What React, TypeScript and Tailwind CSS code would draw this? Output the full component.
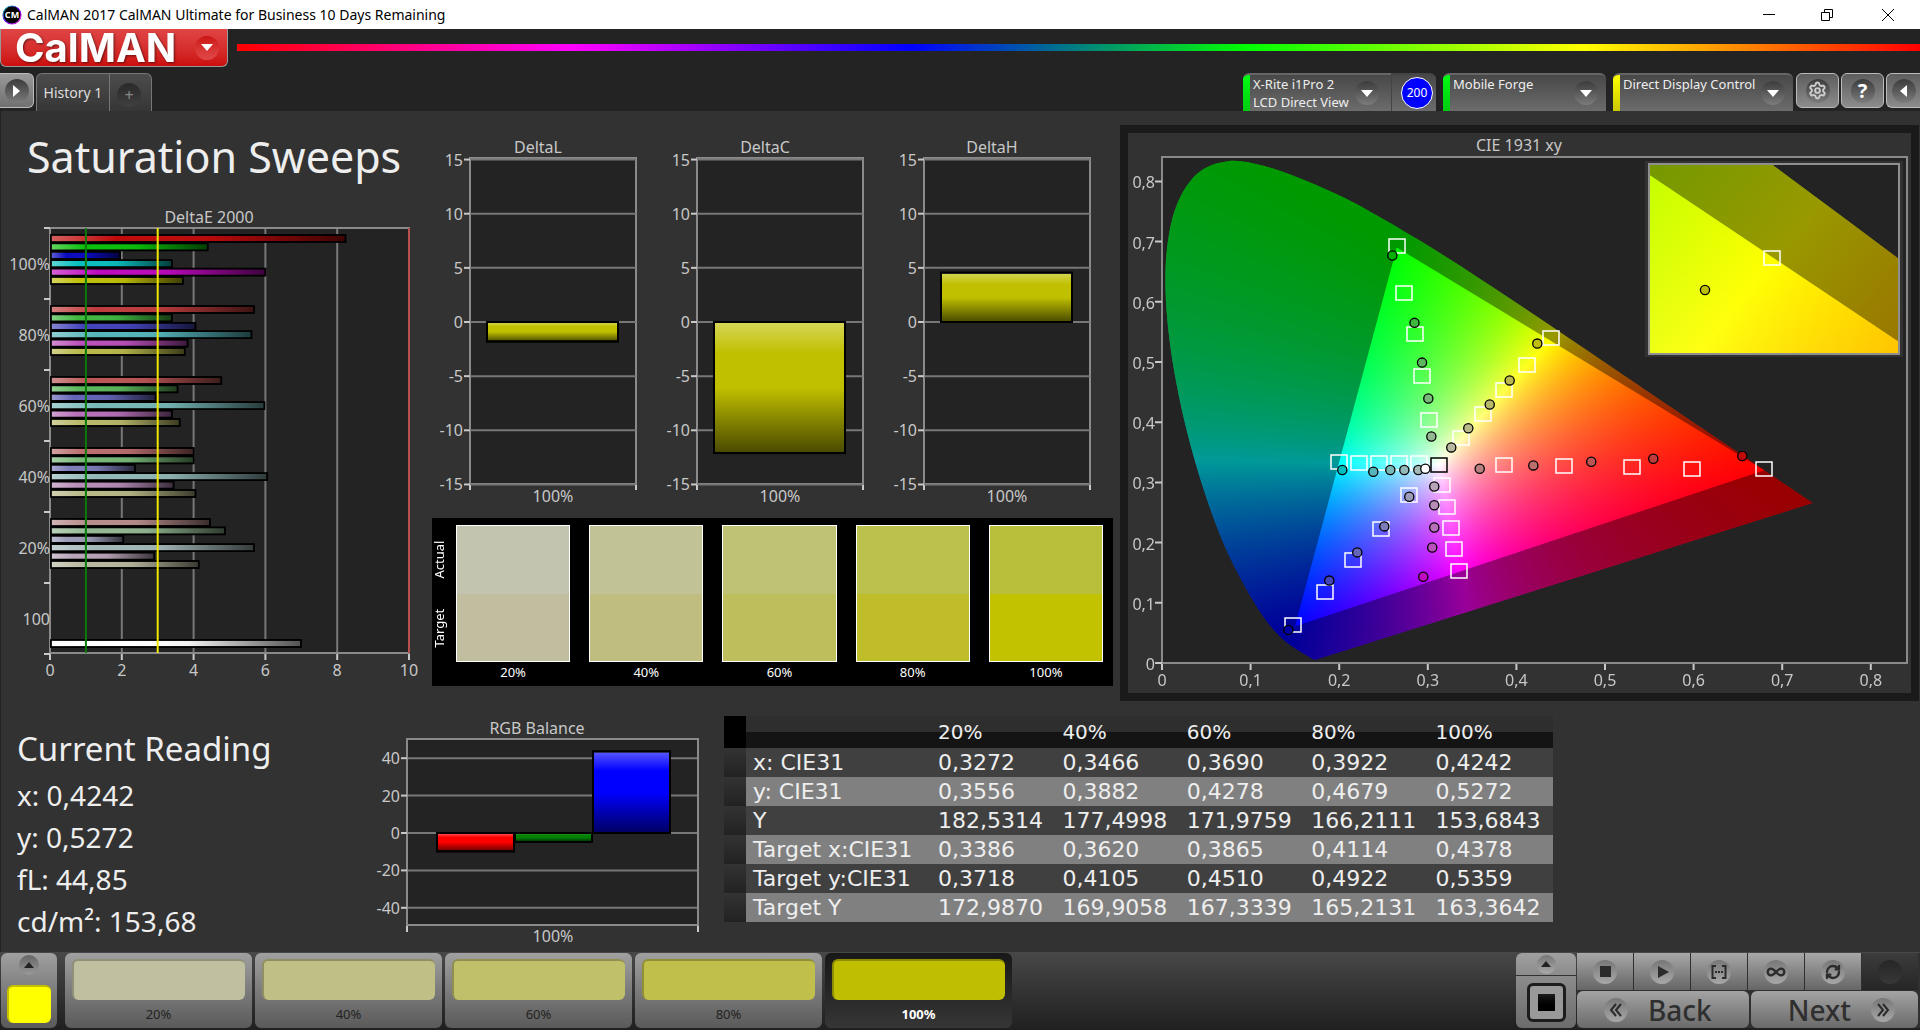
import { useEffect, useRef } from "react";
import type { ReactNode } from "react";
import { Infinity as InfinityIcon, RefreshCw, Settings } from "lucide-react";

type Point = [number, number];

const AXIS_TEXT = "fill-[#c8c8c8] text-[16px]";

const LEVELS = ["100%", "80%", "60%", "40%", "20%"];

const DELTA_E: { value: number; color: string }[][] = [
  [
    { value: 8.26, color: "#bf0a0a" },
    { value: 4.42, color: "#0abf0a" },
    { value: 1.98, color: "#0a0abf" },
    { value: 3.42, color: "#0abfbf" },
    { value: 6.03, color: "#bf0abf" },
    { value: 3.73, color: "#bfbf0a" },
  ],
  [
    { value: 5.71, color: "#bf3c3c" },
    { value: 3.42, color: "#40b840" },
    { value: 4.08, color: "#4444bb" },
    { value: 5.64, color: "#55b5bb" },
    { value: 3.86, color: "#bb50bb" },
    { value: 3.78, color: "#b9b94b" },
  ],
  [
    { value: 4.8, color: "#bb5555" },
    { value: 3.58, color: "#5cb85c" },
    { value: 2.97, color: "#6464b8" },
    { value: 6.0, color: "#78b8b8" },
    { value: 3.42, color: "#b870b8" },
    { value: 3.64, color: "#b9b96a" },
  ],
  [
    { value: 4.03, color: "#bb6e6e" },
    { value: 4.03, color: "#78b878" },
    { value: 2.4, color: "#7c7cb8" },
    { value: 6.08, color: "#92b8b8" },
    { value: 3.47, color: "#b88cb8" },
    { value: 4.08, color: "#b8b888" },
  ],
  [
    { value: 4.48, color: "#b88c8c" },
    { value: 4.9, color: "#94b894" },
    { value: 2.07, color: "#9c9cb8" },
    { value: 5.71, color: "#a4b8b8" },
    { value: 2.93, color: "#b8a4b8" },
    { value: 4.17, color: "#b8b8a0" },
  ],
];

const SWATCHES = [
  { label: "20%", actual: "#c3c4af", target: "#c0be9f", tile: "#c0bf9f" },
  { label: "40%", actual: "#c1c295", target: "#bfbe80", tile: "#c0bf85" },
  { label: "60%", actual: "#bfc174", target: "#bfbe5c", tile: "#c0bf6a" },
  { label: "80%", actual: "#bcc14e", target: "#bfbe2a", tile: "#c0bf4b" },
  { label: "100%", actual: "#b9bf3a", target: "#c3c200", tile: "#bfbe00" },
];

const READINGS = ["x: 0,4242", "y: 0,5272", "fL: 44,85", "cd/m²: 153,68"];

const TABLE_ROWS = [
  ["x: CIE31", "0,3272", "0,3466", "0,3690", "0,3922", "0,4242"],
  ["y: CIE31", "0,3556", "0,3882", "0,4278", "0,4679", "0,5272"],
  ["Y", "182,5314", "177,4998", "171,9759", "166,2111", "153,6843"],
  ["Target x:CIE31", "0,3386", "0,3620", "0,3865", "0,4114", "0,4378"],
  ["Target y:CIE31", "0,3718", "0,4105", "0,4510", "0,4922", "0,5359"],
  ["Target Y", "172,9870", "169,9058", "167,3339", "165,2131", "163,3642"],
];

// Spectral locus, 380-700 nm
const LOCUS: Point[] = [
  [0.1741, 0.005], [0.1714, 0.0051], [0.1689, 0.0069], [0.1644, 0.0109], [0.1566, 0.0177],
  [0.144, 0.0297], [0.1355, 0.0399], [0.1241, 0.0578], [0.1096, 0.0868], [0.0913, 0.1327],
  [0.0687, 0.2007], [0.0454, 0.295], [0.0235, 0.4127], [0.0082, 0.5384], [0.0039, 0.6548],
  [0.0139, 0.7502], [0.0389, 0.812], [0.0743, 0.8338], [0.1142, 0.8262], [0.1547, 0.8059],
  [0.1929, 0.7816], [0.2296, 0.7543], [0.3016, 0.6923], [0.3731, 0.6245], [0.4441, 0.5547],
  [0.5125, 0.4866], [0.5752, 0.4242], [0.627, 0.3725], [0.6658, 0.334], [0.6915, 0.3083],
  [0.719, 0.2809], [0.7347, 0.2653],
];

const GAMUT: Point[] = [[0.68, 0.32], [0.265, 0.69], [0.15, 0.06]];

const TARGETS: Point[] = [
  [0.265, 0.6925], [0.2735, 0.614], [0.285, 0.5465], [0.2935, 0.476], [0.3015, 0.404],
  [0.2, 0.334], [0.2225, 0.332], [0.2445, 0.332], [0.267, 0.332], [0.29, 0.332],
  [0.279, 0.279], [0.2475, 0.2225], [0.216, 0.1705], [0.184, 0.1175], [0.148, 0.0625],
  [0.3165, 0.295], [0.3215, 0.2595], [0.3265, 0.2245], [0.33, 0.1895], [0.3355, 0.1525],
  [0.3378, 0.3738], [0.3625, 0.4131], [0.3857, 0.4532], [0.412, 0.495], [0.4388, 0.5393],
  [0.3857, 0.3295], [0.454, 0.327], [0.53, 0.3256], [0.598, 0.323], [0.68, 0.323],
];

const MEASURED: [number, number, string][] = [
  [0.26, 0.677, "#00b000"], [0.285, 0.565, "#40b840"], [0.2935, 0.499, "#5cb85c"],
  [0.3006, 0.4394, "#78b878"], [0.304, 0.3763, "#94b894"],
  [0.2035, 0.3206, "#00bfbf"], [0.2385, 0.3176, "#55b5bb"], [0.2577, 0.3206, "#78b8b8"],
  [0.2735, 0.3206, "#92b8b8"], [0.2893, 0.3206, "#a4b8b8"], [0.2972, 0.3226, "#ffffff"],
  [0.2791, 0.2762, "#9c9cb8"], [0.2509, 0.2269, "#7c7cb8"], [0.2204, 0.1837, "#6464b8"],
  [0.1888, 0.1369, "#4444bb"], [0.1426, 0.055, "#0000a0"],
  [0.3073, 0.2932, "#b8a4b8"], [0.3073, 0.262, "#b88cb8"], [0.3073, 0.225, "#b870b8"],
  [0.305, 0.1919, "#bb50bb"], [0.2949, 0.1432, "#bf0abf"],
  [0.3265, 0.3581, "#b8b8a0"], [0.3457, 0.39, "#b8b888"], [0.3699, 0.4294, "#b9b96a"],
  [0.3924, 0.4694, "#b9b94b"], [0.4236, 0.5306, "#bfbf0a"],
  [0.3586, 0.3226, "#b88080"], [0.4191, 0.3282, "#bb6e6e"], [0.4845, 0.3344, "#bb5555"],
  [0.5545, 0.3394, "#bf3c3c"], [0.655, 0.3439, "#bf0a0a"],
];

// Fully bright colour for a chromaticity, as [r, g, b] in 0..255
function xyToRgb(x: number, y: number) {
  const z = 1 - x - y;
  const r = Math.max(0, 2.4935 * x - 0.9314 * y - 0.4027 * z);
  const g = Math.max(0, -0.8295 * x + 1.7627 * y + 0.0236 * z);
  const b = Math.max(0, 0.0358 * x - 0.0762 * y + 0.9569 * z);
  const scale = 255 / Math.max(r, g, b, 0.0001);
  return [r * scale, g * scale, b * scale];
}

type ChromaticityProps = { x0: number; x1: number; y0: number; y1: number; width: number; height: number };

const Chromaticity = ({ x0, x1, y0, y1, width, height }: ChromaticityProps) => {
  const ref = useRef<HTMLCanvasElement>(null);

  useEffect(() => {
    const ctx = ref.current?.getContext("2d");
    if (!ctx) return;
    const toPx = ([x, y]: Point): Point => [((x - x0) / (x1 - x0)) * width, ((y1 - y) / (y1 - y0)) * height];

    const field = document.createElement("canvas");
    field.width = width;
    field.height = height;
    const fieldCtx = field.getContext("2d")!;
    const image = fieldCtx.createImageData(width, height);
    for (let j = 0; j < height; j++) {
      for (let i = 0; i < width; i++) {
        const [r, g, b] = xyToRgb(x0 + ((i + 0.5) / width) * (x1 - x0), y1 - ((j + 0.5) / height) * (y1 - y0));
        image.data.set([r, g, b, 255], (j * width + i) * 4);
      }
    }
    fieldCtx.putImageData(image, 0, 0);

    ctx.clearRect(0, 0, width, height);
    ctx.save();
    ctx.beginPath();
    const pts = LOCUS.map(toPx);
    ctx.moveTo(pts[0][0], pts[0][1]);
    for (let i = 0; i < pts.length - 1; i++) {
      const a = pts[Math.max(0, i - 1)];
      const b = pts[i];
      const c = pts[i + 1];
      const d = pts[Math.min(pts.length - 1, i + 2)];
      ctx.bezierCurveTo(
        b[0] + (c[0] - a[0]) / 6, b[1] + (c[1] - a[1]) / 6,
        c[0] - (d[0] - b[0]) / 6, c[1] - (d[1] - b[1]) / 6,
        c[0], c[1],
      );
    }
    ctx.closePath();
    ctx.clip();
    ctx.drawImage(field, 0, 0);
    ctx.fillStyle = "rgba(0,0,0,0.4)";
    ctx.fillRect(0, 0, width, height);
    ctx.restore();

    ctx.save();
    ctx.beginPath();
    GAMUT.map(toPx).forEach(([x, y]) => ctx.lineTo(x, y));
    ctx.closePath();
    ctx.clip();
    ctx.drawImage(field, 0, 0);
    ctx.restore();
  }, [x0, x1, y0, y1, width, height]);

  return <canvas ref={ref} width={width} height={height} className="block" />;
};

const Target = ({ x, y, stroke = "#fff" }: { x: number; y: number; stroke?: string }) => (
  <rect x={Math.round(x) - 8} y={Math.round(y) - 7} width={16} height={14} fill="none" stroke={stroke} strokeWidth={1.5} />
);

const CieChart = () => {
  const px = (x: number) => 34 + x * 886;
  const py = (y: number) => 530 - y * 602;
  return (
    <svg viewBox="0 0 783 560" className="block w-full" role="img" aria-label="CIE 1931 xy chromaticity">
      <text x={391} y={18} textAnchor="middle" className={AXIS_TEXT}>CIE 1931 xy</text>
      <rect x={34} y={24} width={745} height={506} fill="#232323" stroke="#8a8a8a" strokeWidth={2} />
      <foreignObject x={35} y={25} width={743} height={504}>
        <Chromaticity x0={0.001} x1={0.84} y0={0.001} y1={0.839} width={743} height={504} />
      </foreignObject>
      {[0, 1, 2, 3, 4, 5, 6, 7, 8].map((n) => (
        <g key={n}>
          <path d={`M${px(n / 10)} 531v6M34 ${py(n / 10)}h-7`} stroke="#c8c8c8" strokeWidth={2} />
          <text x={px(n / 10)} y={553} textAnchor="middle" className={AXIS_TEXT}>{n ? `0,${n}` : "0"}</text>
          <text x={27} y={py(n / 10) + 7} textAnchor="end" className={AXIS_TEXT}>{n ? `0,${n}` : "0"}</text>
        </g>
      ))}
      {TARGETS.map(([x, y]) => <Target key={`${x}-${y}`} x={px(x)} y={py(y)} />)}
      <Target x={px(0.313)} y={py(0.3295)} stroke="#000" />
      {MEASURED.map(([x, y, color]) => (
        <circle key={`${x}-${y}`} cx={px(x)} cy={py(y)} r={4.6} fill={color} stroke="#000" strokeWidth={1.3} />
      ))}

      <rect x={517} y={28} width={258} height={196} fill="#323232" />
      <rect x={521} y={31} width={250} height={190} fill="#232323" stroke="#8f8f8f" strokeWidth={2} />
      <foreignObject x={522} y={32} width={248} height={188}>
        <Chromaticity x0={0.4126} x1={0.463} y0={0.5103} y1={0.5612} width={248} height={188} />
      </foreignObject>
      <Target x={644} y={125} />
      <circle cx={577} cy={157} r={4.6} fill="#bfbf0a" stroke="#000" strokeWidth={1.3} />
    </svg>
  );
};

const DeltaEChart = () => {
  const px = (v: number) => 50 + v * 35.9;
  return (
    <svg viewBox="0 0 430 485" className="block w-full" role="img" aria-label="DeltaE 2000 by saturation">
      <defs>
        <linearGradient id="sheenX">
          <stop offset="0" stopColor="#fff" stopOpacity={0.35} />
          <stop offset="0.22" stopColor="#fff" stopOpacity={0} />
          <stop offset="0.55" stopColor="#000" stopOpacity={0.05} />
          <stop offset="1" stopColor="#000" stopOpacity={0.68} />
        </linearGradient>
      </defs>
      <text x={209} y={18} textAnchor="middle" className={AXIS_TEXT}>DeltaE 2000</text>
      <rect x={50} y={23} width={359} height={425} fill="#232323" stroke="#8a8a8a" strokeWidth={2} />
      <path d="M409 23v425" stroke="#b85050" strokeWidth={2} />
      {[0, 2, 4, 6, 8, 10].map((v) => (
        <g key={v}>
          {v > 0 && v < 10 && <path d={`M${px(v)} 24v423`} stroke="#777" strokeWidth={2} />}
          <path d={`M${px(v)} 449v6`} stroke="#c8c8c8" strokeWidth={2} />
          <text x={px(v)} y={471} textAnchor="middle" className={AXIS_TEXT}>{v}</text>
        </g>
      ))}
      {[0, 1, 2, 3, 4, 5, 6].map((n) => (
        <path key={n} d={`M44 ${23 + n * 71}h6`} stroke="#c8c8c8" strokeWidth={2} />
      ))}
      {[...LEVELS, "100"].map((label, n) => (
        <text key={label} x={50} y={65 + n * 71} textAnchor="end" className={AXIS_TEXT}>{label}</text>
      ))}
      {DELTA_E.map((group, g) =>
        group.map((bar, i) => (
          <g key={`${g}-${i}`} stroke="#000" strokeWidth={1.5}>
            <rect x={51} y={30 + g * 71 + i * 8.4} width={px(bar.value) - 52} height={7} fill={bar.color} />
            <rect x={51} y={30 + g * 71 + i * 8.4} width={px(bar.value) - 52} height={7} fill="url(#sheenX)" />
          </g>
        )),
      )}
      <rect x={51} y={435} width={250} height={7} fill="#fff" stroke="#000" strokeWidth={1.5} />
      <rect x={51} y={435} width={250} height={7} fill="url(#sheenX)" stroke="#000" strokeWidth={1.5} />
      <path d={`M${px(1)} 23v425`} stroke="#0a7a0a" strokeWidth={2} />
      <path d={`M${px(3)} 23v425`} stroke="#f0e800" strokeWidth={2} />
    </svg>
  );
};

const SheenY = ({ id }: { id: string }) => (
  <defs>
    <linearGradient id={id} x1="0" y1="0" x2="0" y2="1">
      <stop offset="0" stopColor="#fff" stopOpacity={0.35} />
      <stop offset="0.24" stopColor="#fff" stopOpacity={0} />
      <stop offset="0.5" stopColor="#000" stopOpacity={0} />
      <stop offset="1" stopColor="#000" stopOpacity={0.62} />
    </linearGradient>
  </defs>
);

const DeltaChart = ({ title, value }: { title: string; value: number }) => {
  const py = (v: number) => 191 - v * 10.83;
  const top = Math.min(py(0), py(value));
  const height = Math.abs(value) * 10.83;
  return (
    <svg viewBox="0 0 227 387" className="block min-w-0 flex-1" role="img" aria-label={title}>
      <SheenY id={`sheen-${title}`} />
      <text x={108} y={22} textAnchor="middle" className={AXIS_TEXT}>{title}</text>
      <rect x={40} y={27} width={166} height={326} fill="#232323" stroke="#8a8a8a" strokeWidth={2} />
      {[15, 10, 5, 0, -5, -10, -15].map((v) => (
        <g key={v}>
          <path d={`M40 ${py(v)}h166`} stroke="#777" strokeWidth={2} />
          <path d={`M34 ${py(v)}h6`} stroke="#c8c8c8" strokeWidth={2} />
          <text x={33} y={py(v) + 6} textAnchor="end" className={AXIS_TEXT}>{v}</text>
        </g>
      ))}
      <path d="M40 354v5M206 354v5" stroke="#c8c8c8" strokeWidth={2} />
      <rect x={57} y={top} width={131} height={height} fill="#c0c000" stroke="#000" strokeWidth={2} />
      <rect x={57} y={top} width={131} height={height} fill={`url(#sheen-${title})`} stroke="#000" strokeWidth={2} />
      <text x={123} y={371} textAnchor="middle" className={AXIS_TEXT}>100%</text>
    </svg>
  );
};

const RgbBalance = () => {
  const py = (v: number) => 122 - v * 1.87;
  const bars = [
    { x: 77, value: -9.8, color: "#ff0000" },
    { x: 155, value: -4.8, color: "#008000" },
    { x: 233, value: 43.6, color: "#0000ff" },
  ];
  return (
    <svg viewBox="0 0 364 240" className="block w-full" role="img" aria-label="RGB Balance">
      <SheenY id="sheenRgb" />
      <text x={177} y={23} textAnchor="middle" className={AXIS_TEXT}>RGB Balance</text>
      <rect x={47} y={28} width={291} height={186} fill="#232323" stroke="#8a8a8a" strokeWidth={2} />
      {[40, 20, 0, -20, -40].map((v) => (
        <g key={v}>
          <path d={`M48 ${py(v)}h289`} stroke="#777" strokeWidth={2} />
          <path d={`M41 ${py(v)}h6`} stroke="#c8c8c8" strokeWidth={2} />
          <text x={40} y={py(v) + 6} textAnchor="end" className={AXIS_TEXT}>{v}</text>
        </g>
      ))}
      <path d="M47 215v6M338 215v6" stroke="#c8c8c8" strokeWidth={2} />
      {bars.map((bar) => (
        <g key={bar.color} stroke="#000" strokeWidth={2}>
          <rect x={bar.x} y={Math.min(py(0), py(bar.value))} width={77} height={Math.abs(bar.value) * 1.87} fill={bar.color} />
          <rect x={bar.x} y={Math.min(py(0), py(bar.value))} width={77} height={Math.abs(bar.value) * 1.87} fill="url(#sheenRgb)" />
        </g>
      ))}
      <text x={193} y={231} textAnchor="middle" className={AXIS_TEXT}>100%</text>
    </svg>
  );
};

const Disc = ({ children }: { children?: ReactNode }) => (
  <span className="flex h-6 w-6 shrink-0 items-center justify-center rounded-full bg-gradient-to-b from-[#777] to-[#a8a8a8] text-[#2b2b2b]">
    {children}
  </span>
);

const DarkDisc = ({ children }: { children: ReactNode }) => (
  <span className="flex h-6 w-6 shrink-0 items-center justify-center rounded-full bg-gradient-to-b from-[#3c3c3c] to-[#7c7c7c] text-white">
    {children}
  </span>
);

const Caret = () => (
  <svg viewBox="0 0 12 7" className="h-[7px] w-3" aria-hidden="true"><path d="M0 0h12l-6 7z" fill="#fff" /></svg>
);

const TitleBar = () => (
  <div className="flex h-[29px] items-center bg-white pl-[2px] text-black">
    <svg viewBox="0 0 20 20" className="h-5 w-5" aria-hidden="true">
      <defs>
        <linearGradient id="ring" x1="0" y1="0" x2="1" y2="1">
          <stop offset="0" stopColor="#0c8" />
          <stop offset="0.5" stopColor="#60f" />
          <stop offset="1" stopColor="#e3c" />
        </linearGradient>
      </defs>
      <circle cx="10" cy="10" r="9" fill="#000" stroke="url(#ring)" strokeWidth="1.2" />
      <text x="10" y="13" textAnchor="middle" fontSize="9" fontWeight="700" fill="#fff">CM</text>
    </svg>
    <span className="ml-[5px] flex-1 text-[14px]">CalMAN 2017 CalMAN Ultimate for Business 10 Days Remaining</span>
    <div className="flex">
      <button aria-label="Minimize" className="flex h-[29px] w-[58px] items-center justify-center">
        <svg viewBox="0 0 12 12" className="h-3 w-3"><path d="M0 5.5h12" stroke="#000" /></svg>
      </button>
      <button aria-label="Restore" className="flex h-[29px] w-[58px] items-center justify-center">
        <svg viewBox="0 0 12 12" className="h-3 w-3"><path d="M.5 3.5h8v8h-8zM3.5 3V.5h8v8H9" fill="none" stroke="#000" /></svg>
      </button>
      <button aria-label="Close" className="flex h-[29px] w-16 items-center justify-center">
        <svg viewBox="0 0 12 12" className="h-3 w-3"><path d="M0 0l12 12M12 0L0 12" stroke="#000" /></svg>
      </button>
    </div>
  </div>
);

const SourceTab = ({ lines, color, className }: { lines: string[]; color: string; className: string }) => (
  <button className={`flex h-[38px] items-start overflow-hidden border-t-2 border-[#666] bg-gradient-to-b from-[#484848] to-[#6c6c6c] text-left text-[13px] text-[#eee] ${className}`}>
    <span className={`h-full w-[7px] shrink-0 bg-gradient-to-b ${color}`} />
    <span className="flex-1 pl-[3px] leading-[18px] whitespace-nowrap">
      {lines.map((line) => <span key={line} className="block">{line}</span>)}
    </span>
    <span className="mt-[6px]"><DarkDisc><Caret /></DarkDisc></span>
  </button>
);

const SquareButton = ({ label, className, children }: { label: string; className: string; children: ReactNode }) => (
  <button aria-label={label} className={`flex h-[35px] items-center justify-center border border-[#bbb] bg-gradient-to-b from-[#5e5e5e] to-[#8c8c8c] ${className}`}>
    <DarkDisc>{children}</DarkDisc>
  </button>
);

const Header = () => (
  <header className="bg-[#232323]">
    <div className="flex h-[43px] items-start gap-[9px]">
      <button aria-label="CalMAN menu" className="flex h-[38px] w-[228px] shrink-0 items-center justify-between rounded-b-md border border-t-0 border-[#999] bg-gradient-to-b from-[#e04545] to-[#cc0c0c] pr-2 pl-[14px] text-white">
        <span className="font-['Inter'] text-[40px] leading-[34px] font-bold drop-shadow-[1px_1px_1px_rgba(0,0,0,0.5)]">CalMAN</span>
        <span className="flex h-6 w-6 items-center justify-center rounded-full bg-gradient-to-b from-[#cc1111] to-[#e04848]"><Caret /></span>
      </button>
      <div className="mt-[15px] h-[7px] flex-1 bg-[linear-gradient(90deg,#ff0000_0%,#ff00ff_20%,#0000ff_40%,#00ff00_60%,#ffff00_80%,#ff0000_100%)]" />
    </div>
    <div className="flex h-[39px] items-start justify-between">
      <div className="flex items-start gap-[2px]">
        <button aria-label="Expand" className="mt-px flex h-[35px] w-[34px] items-center justify-center rounded-r-md border border-l-0 border-[#bbb] bg-gradient-to-b from-[#999] to-[#707070]">
          <DarkDisc>
            <svg viewBox="0 0 7 12" className="h-3 w-[7px]"><path d="M0 0l7 6-7 6z" fill="#fff" /></svg>
          </DarkDisc>
        </button>
        <div className="mt-px flex h-[38px] rounded-t-md border border-b-0 border-[#777] bg-gradient-to-b from-[#4c4c4c] to-[#363636]">
          <button className="w-[73px] border-r border-[#777] text-[14px] text-[#ddd]">History 1</button>
          <button aria-label="Add history" className="flex w-[41px] items-center justify-start pt-1 pl-[7px]">
            <span className="flex h-6 w-6 items-center justify-center rounded-full bg-gradient-to-b from-[#2a2a2a] to-[#404040] text-[16px] leading-none text-[#888]">+</span>
          </button>
        </div>
      </div>
      <div className="flex items-start pt-px">
        <SourceTab lines={["X-Rite i1Pro 2", "LCD Direct View"]} color="from-[#00ff10] to-[#00cc10]" className="w-[148px] rounded-tl-md pr-3" />
        <div className="flex h-[38px] w-[45px] items-center justify-end rounded-tr-md border-t-2 border-l border-[#444] bg-gradient-to-b from-[#484848] to-[#6c6c6c] pr-[3px]">
          <span className="flex h-8 w-8 items-center justify-center rounded-full border border-white bg-[#0000ff] text-[12px] text-white">200</span>
        </div>
        <SourceTab lines={["Mobile Forge"]} color="from-[#00ff10] to-[#00cc10]" className="ml-[7px] w-[163px] rounded-t-md pr-2" />
        <SourceTab lines={["Direct Display Control"]} color="from-[#ffff00] to-[#ccc800]" className="ml-[7px] w-[180px] rounded-t-md pr-2" />
        <div className="ml-[3px] flex gap-[2px]">
          <SquareButton label="Settings" className="w-[43px] rounded-md"><Settings size={19} color="#ccc" strokeWidth={2.5} /></SquareButton>
          <SquareButton label="Help" className="w-[43px] rounded-md"><span className="text-[20px] leading-none font-bold">?</span></SquareButton>
          <SquareButton label="Collapse" className="w-[34px] rounded-l-md border-r-0">
            <svg viewBox="0 0 7 12" className="h-3 w-[7px]"><path d="M7 0L0 6l7 6z" fill="#fff" /></svg>
          </SquareButton>
        </div>
      </div>
    </div>
  </header>
);

const SwatchPanel = () => (
  <div className="mr-[2px] ml-[2px] flex h-[168px] bg-black pt-[7px] pr-[10px] text-[13px] text-white">
    <div className="flex h-[137px] w-6 shrink-0 flex-col pr-2">
      <span className="flex flex-1 rotate-180 items-center justify-center [writing-mode:vertical-rl]">Actual</span>
      <span className="flex flex-1 rotate-180 items-center justify-center [writing-mode:vertical-rl]">Target</span>
    </div>
    <div className="grid flex-1 grid-cols-5 gap-[19px]">
      {SWATCHES.map((s) => (
        <div key={s.label} className="text-center">
          <div className="h-[137px] border border-white">
            <div className="h-1/2" style={{ backgroundColor: s.actual }} />
            <div className="h-1/2" style={{ backgroundColor: s.target }} />
          </div>
          <p className="leading-[20px]">{s.label}</p>
        </div>
      ))}
    </div>
  </div>
);

const ReadingsTable = () => (
  <table className="w-full table-fixed border-collapse text-left font-['DejaVu_Sans'] text-[22px] text-[#eee]">
    <colgroup>
      <col className="w-[22px]" />
      <col className="w-[185px]" />
      <col /><col /><col /><col /><col />
    </colgroup>
    <thead>
      <tr className="h-8">
        <td className="bg-black" />
        <td className="bg-[linear-gradient(#2e2e2e_50%,#141414_50%)]" />
        {[...LEVELS].reverse().map((level) => (
          <th key={level} scope="col" className="bg-[linear-gradient(#2e2e2e_50%,#141414_50%)] pl-[7px] text-[20px] leading-7 font-normal">{level}</th>
        ))}
      </tr>
    </thead>
    <tbody>
      {TABLE_ROWS.map(([name, ...values]) => (
        <tr key={name} className="h-[29px] odd:bg-[#404040] even:bg-[#808080]">
          <td className="bg-gradient-to-b from-[#333] to-[#222]" />
          <th scope="row" className="pl-[7px] leading-7 font-normal whitespace-nowrap">{name}</th>
          {values.map((value) => <td key={value} className="pl-[7px] leading-7">{value}</td>)}
        </tr>
      ))}
    </tbody>
  </table>
);

const TransportButton = ({ label, children }: { label: string; children: ReactNode }) => (
  <button aria-label={label} className="flex flex-1 items-center justify-center bg-gradient-to-b from-[#a8a8a8] to-[#666]">
    <Disc>{children}</Disc>
  </button>
);

const BottomBar = () => (
  <footer className="flex h-[78px] items-stretch bg-gradient-to-b from-[#484848] to-[#202020] pt-px pb-[2px]">
    <button aria-label="Pattern colour" className="ml-px flex w-14 flex-col items-center justify-between rounded-md bg-gradient-to-b from-[#a0a0a0] to-[#5a5a5a] pt-[2px] pb-[5px]">
      <span className="flex h-5 w-5 items-center justify-center rounded-full bg-gradient-to-b from-[#666] to-[#999]">
        <svg viewBox="0 0 10 6" className="h-[6px] w-[10px]"><path d="M0 6h10L5 0z" fill="#222" /></svg>
      </span>
      <span className="h-[38px] w-11 rounded-md border-t-2 border-l-2 border-[#c4c000] bg-[#ffff00]" />
    </button>
    <div className="ml-2 flex flex-1 gap-[3px]">
      {SWATCHES.map((s) => {
        const active = s.label === "100%";
        return (
          <button
            key={s.label}
            aria-pressed={active}
            className={`flex w-[187px] flex-col rounded-md px-[7px] pt-[6px] text-center text-[13px] ${active ? "bg-gradient-to-b from-[#181818] to-[#363636] font-bold text-white" : "bg-gradient-to-b from-[#a0a0a0] to-[#5a5a5a] text-[#222]"}`}
          >
            <span className="block h-[45px] w-full rounded-md border-t-2 border-l-2 border-black/25 bg-clip-border" style={{ backgroundColor: s.tile }} />
            <span className="block w-full leading-[28px]">{s.label}</span>
          </button>
        );
      })}
    </div>
    <div className="flex w-[60px] flex-col gap-px rounded-md bg-[#333]">
      <button aria-label="Show patterns" className="flex h-[22px] items-center justify-center rounded-t-md bg-gradient-to-b from-[#a0a0a0] to-[#8c8c8c]">
        <span className="flex h-[19px] w-[19px] items-center justify-center rounded-full bg-gradient-to-b from-[#777] to-[#aaa]">
          <svg viewBox="0 0 10 6" className="h-[6px] w-[10px]"><path d="M0 6h10L5 0z" fill="#222" /></svg>
        </span>
      </button>
      <button aria-label="Window pattern" className="flex flex-1 items-center justify-center rounded-b-md bg-gradient-to-b from-[#8c8c8c] to-[#6c6c6c]">
        <span className="flex h-[39px] w-[39px] items-center justify-center rounded-md border-[3px] border-[#1c1c1c] bg-[#999]">
          <span className="h-[17px] w-[17px] bg-gradient-to-b from-[#1c1c1c] to-black" />
        </span>
      </button>
    </div>
    <div className="ml-px flex w-[343px] flex-col gap-px bg-[#303030] pr-[2px]">
      <div className="flex flex-1 gap-px">
        <TransportButton label="Stop"><span className="h-[11px] w-[11px] bg-[#2b2b2b]" /></TransportButton>
        <TransportButton label="Play">
          <svg viewBox="0 0 11 12" className="ml-[2px] h-3 w-[11px]"><path d="M0 0l11 6-11 6z" fill="#2b2b2b" /></svg>
        </TransportButton>
        <TransportButton label="Range">
          <svg viewBox="0 0 16 14" className="h-[14px] w-4" fill="none" stroke="#2b2b2b" strokeWidth={2}>
            <path d="M5 1H1.500v12H5M11 1h3.500v12H11" />
            <path d="M4 7h8" strokeDasharray="2 1" />
          </svg>
        </TransportButton>
        <TransportButton label="Continuous"><InfinityIcon size={20} strokeWidth={2.8} /></TransportButton>
        <TransportButton label="Repeat"><RefreshCw size={16} strokeWidth={3.5} /></TransportButton>
        <button aria-label="Record" disabled className="flex flex-1 items-center justify-center bg-gradient-to-b from-[#3c3c3c] to-[#262626]">
          <span className="h-6 w-6 rounded-full bg-gradient-to-b from-[#262626] to-[#383838]" />
        </button>
      </div>
      <div className="flex flex-1 gap-[2px] text-[28px] leading-none font-medium text-[#2f2f2f]">
        <button className="flex flex-1 items-center justify-start gap-5 rounded-md bg-gradient-to-b from-[#a4a4a4] to-[#6a6a6a] pl-[27px]">
          <Disc>
            <svg viewBox="0 0 14 14" className="h-[14px] w-[14px]" fill="none" stroke="currentColor" strokeWidth={2}><path d="M7 1L2 7l5 6M12 1L7 7l5 6" /></svg>
          </Disc>
          Back
        </button>
        <button className="flex flex-1 items-center justify-end gap-5 rounded-md bg-gradient-to-b from-[#a4a4a4] to-[#6a6a6a] pr-[23px]">
          Next
          <Disc>
            <svg viewBox="0 0 14 14" className="h-[14px] w-[14px]" fill="none" stroke="currentColor" strokeWidth={2}><path d="M2 1l5 6-5 6M7 1l5 6-5 6" /></svg>
          </Disc>
        </button>
      </div>
    </div>
  </footer>
);

export default function App() {
  return (
    <div className="flex min-h-screen flex-col bg-[#323232] font-['Noto_Sans',sans-serif] text-[#eee]">
      <TitleBar />
      <Header />
      <main className="flex-1 shadow-[inset_1px_0_0_#222]">
        <div className="grid grid-cols-[430fr_685fr_805fr]">
          <section>
            <h1 className="h-[94px] pl-[27px] text-[43px] leading-[92px] whitespace-nowrap">Saturation Sweeps</h1>
            <DeltaEChart />
          </section>
          <section className="pt-5">
            <div className="flex pr-1">
              <DeltaChart title="DeltaL" value={-1.8} />
              <DeltaChart title="DeltaC" value={-12.1} />
              <DeltaChart title="DeltaH" value={4.55} />
            </div>
            <SwatchPanel />
          </section>
          <section className="pt-[14px] pr-px pl-[5px]">
            <div className="border-8 border-[#1a1a1a]"><CieChart /></div>
          </section>
        </div>
        <div className="grid grid-cols-[360fr_364fr_829fr_367fr] pt-[10px]">
          <section className="pl-[17px] text-[28px] leading-[42px]">
            <h2 className="pt-[17px] text-[33px] leading-[42px]">Current Reading</h2>
            <div className="pt-1">
              {READINGS.map((reading) => <p key={reading}>{reading}</p>)}
            </div>
          </section>
          <RgbBalance />
          <section className="pt-[5px]"><ReadingsTable /></section>
        </div>
      </main>
      <BottomBar />
    </div>
  );
}
